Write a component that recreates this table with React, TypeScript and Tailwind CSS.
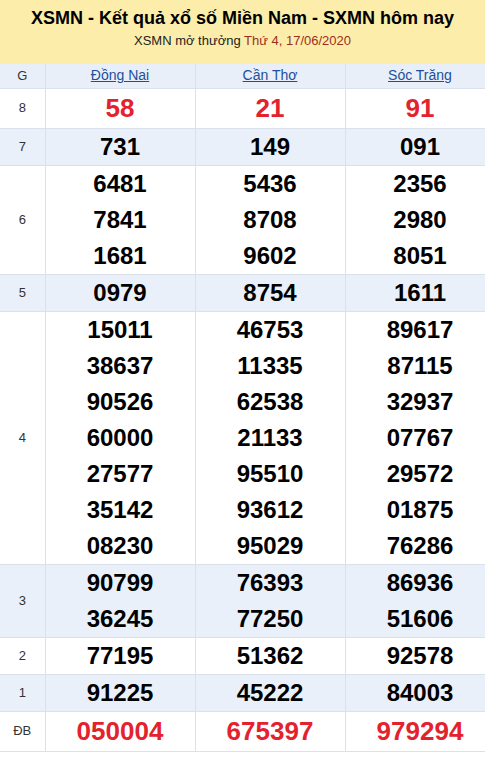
import React from 'react';

type Row = { label: string; values: string[][]; big?: boolean; shaded?: boolean };

const provinces = ['Đồng Nai', 'Cần Thơ', 'Sóc Trăng'];

const rows: Row[] = [
  { label: '8', values: [['58'], ['21'], ['91']], big: true },
  { label: '7', values: [['731'], ['149'], ['091']], shaded: true },
  { label: '6', values: [['6481', '7841', '1681'], ['5436', '8708', '9602'], ['2356', '2980', '8051']] },
  { label: '5', values: [['0979'], ['8754'], ['1611']], shaded: true },
  {
    label: '4',
    values: [
      ['15011', '38637', '90526', '60000', '27577', '35142', '08230'],
      ['46753', '11335', '62538', '21133', '95510', '93612', '95029'],
      ['89617', '87115', '32937', '07767', '29572', '01875', '76286'],
    ],
  },
  { label: '3', values: [['90799', '36245'], ['76393', '77250'], ['86936', '51606']], shaded: true },
  { label: '2', values: [['77195'], ['51362'], ['92578']] },
  { label: '1', values: [['91225'], ['45222'], ['84003']], shaded: true },
  { label: 'ĐB', values: [['050004'], ['675397'], ['979294']], big: true },
];

export default function App() {
  return (
    <div className="w-[485px] h-[760px] overflow-hidden bg-white font-['Liberation_Sans',Arial,sans-serif]">
      <div className="h-[64px] bg-[#fcedab] flex flex-col items-center pt-[6px]">
        <h1 className="text-[18px] leading-[24px] font-bold text-black">
          XSMN - Kết quả xổ số Miền Nam - SXMN hôm nay
        </h1>
        <p className="text-[13px] leading-[20px] mt-[1px] text-[#222]">
          XSMN mở thưởng <span className="text-[#9b2f1f]">Thứ 4, 17/06/2020</span>
        </p>
      </div>

      <table className="w-[495px] border-collapse table-fixed">
        <colgroup>
          <col className="w-[45px]" />
          <col className="w-[150px]" />
          <col className="w-[150px]" />
          <col className="w-[150px]" />
        </colgroup>
        <thead>
          <tr className="bg-[#e9eff8] h-[24px]">
            <th className="border-r border-[#dbe1ea] text-[13px] font-normal text-[#333]">G</th>
            {provinces.map((p) => (
              <th key={p} className="border-r border-[#dbe1ea] text-[14px] font-normal">
                <a href="#" className="underline text-[#1d4f9c]">{p}</a>
              </th>
            ))}
          </tr>
        </thead>
        <tbody>
          {rows.map((row) => (
            <tr key={row.label} className={`border-t border-[#dbe1ea] ${row.shaded ? 'bg-[#eaf0f9]' : 'bg-white'}`}>
              <td className="border-r border-[#dbe1ea] text-center text-[13px] text-[#333]">{row.label}</td>
              {row.values.map((col, i) => (
                <td key={i} className="border-r border-[#dbe1ea] text-center">
                  {col.map((v) =>
                    row.big ? (
                      <div key={v} className="text-[26px] leading-[39px] font-bold text-[#e4222d]">{v}</div>
                    ) : (
                      <div key={v} className="text-[24px] leading-[36px] font-bold text-black">{v}</div>
                    )
                  )}
                </td>
              ))}
            </tr>
          ))}
          <tr className="border-t border-[#dbe1ea] h-[1px]"><td colSpan={4}></td></tr>
        </tbody>
      </table>
    </div>
  );
}
